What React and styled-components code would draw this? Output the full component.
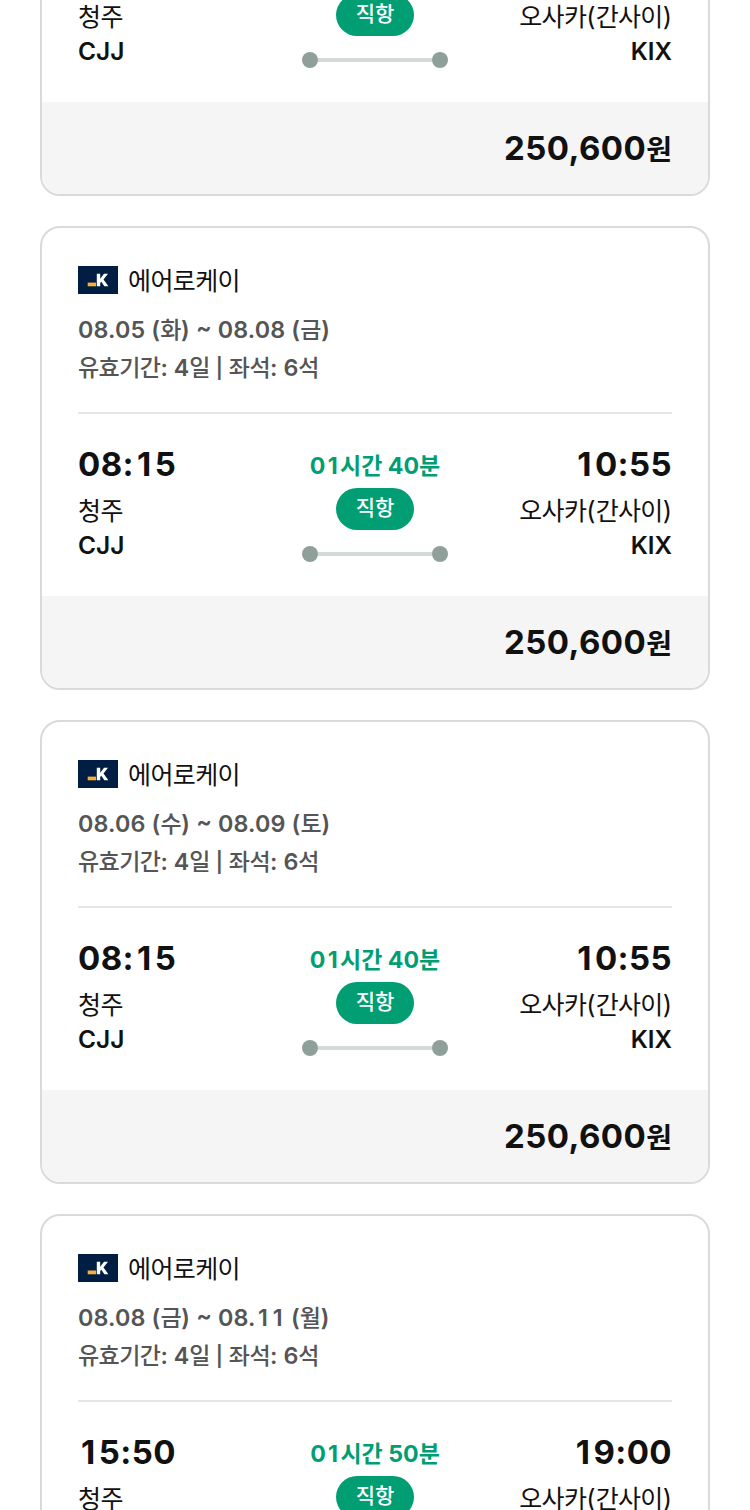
import { Fragment } from "react";
import styled, { createGlobalStyle } from "styled-components";

const GlobalStyle = createGlobalStyle`
  * {
    box-sizing: border-box;
  }

  body {
    margin: 0;
    background-color: #ffffff;
    color: #111111;
    font-family: Inter, "Noto Sans CJK KR", sans-serif;
  }

  p, ul {
    margin: 0;
    padding: 0;
  }
`;

const Screen = styled.main`
  width: 750px;
  height: 1510px;
  overflow: hidden;
`;

/* scrolled so that the first card is partly above the viewport */
const FlightList = styled.ul`
  display: flex;
  flex-direction: column;
  gap: 30px;
  margin-top: -268px;
  padding: 0 40px;
  list-style: none;
`;

const Card = styled.li`
  height: 464px;
  border: 2px solid #d9dada;
  border-radius: 20px;
  overflow: hidden;
`;

const CardBody = styled.div`
  display: flex;
  flex-direction: column;
  justify-content: flex-end;
  height: 368px;
  padding: 0 36px 34px;
`;

const Airline = styled.div`
  display: flex;
  align-items: center;
  gap: 10px;
  height: 28px;
  margin-bottom: 17px;

  p {
    margin-top: 2px;
  }
`;

const Line = styled.p`
  font-size: ${(props) => props.$size}px;
  font-weight: ${(props) => props.$weight || 500};
  line-height: ${(props) => props.$height}px;
  letter-spacing: ${(props) => props.$spacing || 0}px;
  color: ${(props) => props.$color || "#111111"};
  white-space: pre;
`;

const Hangul = styled.span`
  font-family: "Noto Sans CJK KR", sans-serif;
  font-size: ${(props) => props.$size}px;
  font-weight: ${(props) => props.$weight};
  letter-spacing: ${(props) => props.$spacing}px;
  line-height: 1;
`;

const One = styled.span`
  display: inline-block;
  width: 0.63em;
  text-align: center;
`;

const Tilde = styled.span`
  position: relative;
  top: -2px;
`;

const Divider = styled.span`
  position: relative;
  top: -1px;
  font-size: 20px;
  line-height: 1;
`;

const Route = styled.div`
  display: flex;
  align-items: flex-end;
  justify-content: space-between;
  margin-top: 25px;
  padding-top: 30px;
  border-top: 2px solid #e5e5e5;
`;

const Place = styled.div`
  width: 200px;
  text-align: ${(props) => props.$align};
`;

const Time = styled.div`
  margin-bottom: 9px;
`;

const Middle = styled.div`
  display: flex;
  flex-direction: column;
  align-items: center;
  width: 146px;
`;

const Badge = styled.div`
  display: flex;
  justify-content: center;
  width: 78px;
  height: 42px;
  margin-top: 2px;
  border-radius: 21px;
  background-color: #019e74;
`;

const Track = styled.div`
  display: flex;
  align-items: center;
  width: 146px;
  margin-top: 16px;
`;

const Dot = styled.span`
  width: 16px;
  height: 16px;
  border-radius: 50%;
  background-color: #8f9f99;
`;

const Bar = styled.span`
  flex: 1;
  height: 4px;
  background-color: #d3dbd8;
`;

const Price = styled.div`
  display: flex;
  align-items: center;
  justify-content: flex-end;
  height: 92px;
  padding: 0 36px;
  background-color: #f5f5f5;
`;

// a flight without a schedule keeps only its route and price
const flights = [
  { id: 1 },
  { id: 2, period: "08.05 (화) ~ 08.08 (금)", depart: "08:15", arrive: "10:55", duration: "01시간 40분" },
  { id: 3, period: "08.06 (수) ~ 08.09 (토)", depart: "08:15", arrive: "10:55", duration: "01시간 40분" },
  { id: 4, period: "08.08 (금) ~ 08.11 (월)", depart: "15:50", arrive: "19:00", duration: "01시간 50분" },
];

// Latin and Hangul runs are set with separate sizes so that their widths balance,
// and the digit 1 takes the width of the other digits
function Text({ children, size, koSize, koWeight = 500, koSpacing = 0, ...rest }) {
  return (
    <Line $size={size} {...rest}>
      {children.split(/([가-힣]+|[|~1])/).map((part, i) => {
        if (part === "|") return <Divider key={i}>|</Divider>;
        if (part === "~") return <Tilde key={i}>~</Tilde>;
        if (part === "1") return <One key={i}>1</One>;
        return i % 2 ? (
          <Hangul key={i} $size={koSize} $weight={koWeight} $spacing={koSpacing}>
            {part}
          </Hangul>
        ) : (
          <Fragment key={i}>{part}</Fragment>
        );
      })}
    </Line>
  );
}

function AerokLogo() {
  return (
    <svg width="40" height="28" viewBox="0 0 40 28" aria-label="에어로케이">
      <path d="M0 0H40V28H0Z" fill="#001d44" />
      <path d="M9.7 16.6H18V20.3H9.7Z" fill="#f5b335" />
      <path
        d="M18.8 7.8H22.2V12.7L26 7.8H30L25.5 13.4L30.4 20.3H26.4L23.3 15.8L22.2 17.1V20.3H18.8Z"
        fill="#ffffff"
      />
    </svg>
  );
}

function FlightCard({ flight }) {
  return (
    <Card>
      <CardBody>
        {flight.period && (
          <>
            <Airline>
              <AerokLogo />
              <Text size={26} koSize={25} koWeight={400} koSpacing={-0.6} $height={28}>에어로케이</Text>
            </Airline>
            <Text size={23.3} koSize={23} koSpacing={-0.2} $height={38} $weight={600} $spacing={0.14} $color="#555555">
              {flight.period}
            </Text>
            <Text size={23.3} koSize={23} koSpacing={-0.55} $height={38} $weight={600} $color="#555555">
              유효기간: 4일 | 좌석: 6석
            </Text>
          </>
        )}
        <Route>
          <Place $align="left">
            {flight.depart && (
              <Time>
                <Text size={33} $height={40} $weight={700} $spacing={0.4}>{flight.depart}</Text>
              </Time>
            )}
            <Text size={25.5} koSize={25} koWeight={400} koSpacing={-0.6} $height={36} $weight={400}>청주</Text>
            <Text size={24.5} $height={33} $weight={600}>CJJ</Text>
          </Place>
          <Middle>
            {flight.duration && (
              <Text size={23.2} koSize={23} koWeight={700} $height={40} $weight={700} $color="#019e74">
                {flight.duration}
              </Text>
            )}
            <Badge>
              <Text size={22} koSize={21} $height={39} $color="#ffffff">직항</Text>
            </Badge>
            <Track>
              <Dot />
              <Bar />
              <Dot />
            </Track>
          </Middle>
          <Place $align="right">
            {flight.arrive && (
              <Time>
                <Text size={33} $height={40} $weight={700} $spacing={0.4}>{flight.arrive}</Text>
              </Time>
            )}
            <Text size={25.5} koSize={25} koWeight={400} koSpacing={-0.65} $height={36} $weight={400}>오사카(간사이)</Text>
            <Text size={24.3} $height={33} $weight={600}>KIX</Text>
          </Place>
        </Route>
      </CardBody>
      <Price>
        <Text size={33} koSize={28} koWeight={700} $height={40} $weight={700} $spacing={0.45}>250,600원</Text>
      </Price>
    </Card>
  );
}

function App() {
  return (
    <>
      <GlobalStyle />
      <Screen>
        <FlightList>
          {flights.map((flight) => (
            <FlightCard key={flight.id} flight={flight} />
          ))}
        </FlightList>
      </Screen>
    </>
  );
}

export default App;
